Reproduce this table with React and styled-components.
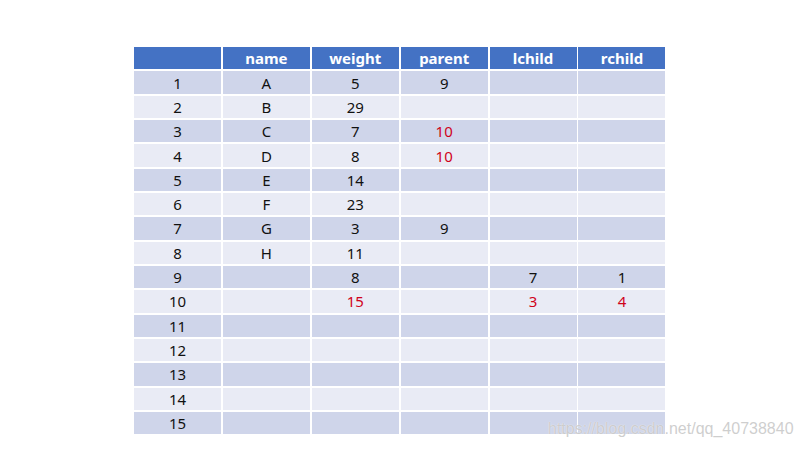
import React from "react";
import styled, { createGlobalStyle } from "styled-components";

const GlobalStyle = createGlobalStyle`
  body {
    margin: 0;
    background: #ffffff;
    font-family: "Noto Sans", "Open Sans", sans-serif;
  }
`;

const headers = ["", "name", "weight", "parent", "lchild", "rchild"];

// each cell: plain string, or { v, red: true }
const rows = [
  ["1", "A", "5", "9", "", ""],
  ["2", "B", "29", "", "", ""],
  ["3", "C", "7", { v: "10", red: true }, "", ""],
  ["4", "D", "8", { v: "10", red: true }, "", ""],
  ["5", "E", "14", "", "", ""],
  ["6", "F", "23", "", "", ""],
  ["7", "G", "3", "9", "", ""],
  ["8", "H", "11", "", "", ""],
  ["9", "", "8", "", "7", "1"],
  ["10", "", { v: "15", red: true }, "", { v: "3", red: true }, { v: "4", red: true }],
  ["11", "", "", "", "", ""],
  ["12", "", "", "", "", ""],
  ["13", "", "", "", "", ""],
  ["14", "", "", "", "", ""],
  ["15", "", "", "", "", ""],
];

const App = () => {
  return (
    <Page>
      <GlobalStyle />
      <Table>
        {headers.map((h, i) => (
          <HeadCell key={"h" + i}>{h}</HeadCell>
        ))}
        {rows.map((row, r) =>
          row.map((c, i) => {
            const val = typeof c === "string" ? c : c.v;
            const red = typeof c === "object" && c.red;
            return (
              <Cell key={r + "-" + i} $odd={r % 2 === 0} $red={red}>
                {val}
              </Cell>
            );
          })
        )}
      </Table>
      <Watermark>https://blog.csdn.net/qq_40738840</Watermark>
    </Page>
  );
};

const Page = styled.div`
  position: relative;
  width: 800px;
  height: 450px;
  box-sizing: border-box;
  padding: 47px 0 0 134px;
  overflow: hidden;
`;

const Table = styled.div`
  display: grid;
  grid-template-columns: repeat(6, 87px);
  grid-template-rows: repeat(16, 22.4px);
  column-gap: 1.9px;
  row-gap: 1.95px;
  width: 532px;
`;

const HeadCell = styled.div`
  background: #4472c4;
  color: #ffffff;
  font-weight: 700;
  font-size: 15px;
  display: flex;
  align-items: center;
  justify-content: center;
`;

const Cell = styled.div`
  background: ${(p) => (p.$odd ? "#cfd5ea" : "#e9ebf5")};
  color: ${(p) => (p.$red ? "#d0021b" : "#111111")};
  font-size: 15px;
  display: flex;
  align-items: center;
  justify-content: center;
`;

const Watermark = styled.div`
  position: absolute;
  left: 548px;
  top: 420px;
  font-family: "Liberation Sans", Arial, sans-serif;
  font-size: 16px;
  color: rgba(190, 190, 190, 0.75);
  text-shadow: 0 0 1px #ffffff;
  white-space: nowrap;
`;

export default App;
